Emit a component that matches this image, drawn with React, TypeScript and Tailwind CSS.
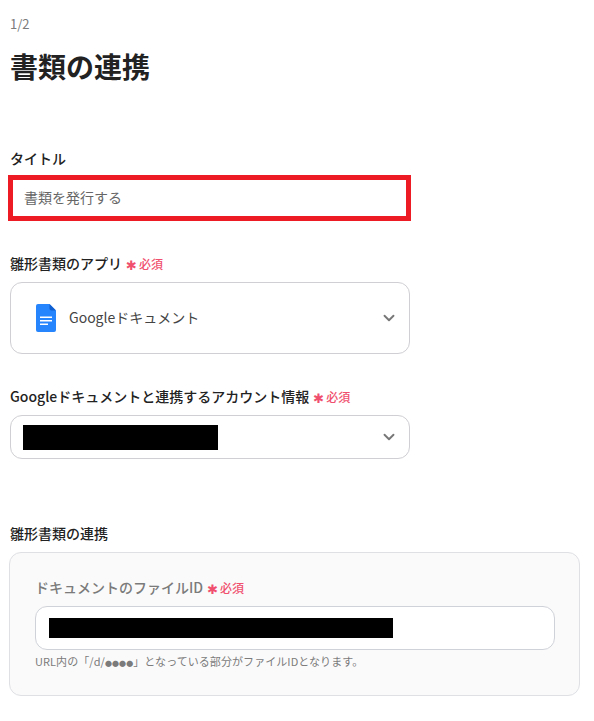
import { ChevronDown } from "lucide-react";

const font = { fontFamily: '"Noto Sans CJK JP", "Liberation Sans", sans-serif' };

function Required() {
  return (
    <span className="ml-[4px] mt-[2px] inline-flex items-center text-[12px] font-medium leading-none text-[#f0506e]">
      <span className="mr-[2px] mt-[2px] text-[13px] leading-none" style={{ fontFamily: '"DejaVu Sans", sans-serif' }}>
        ✱
      </span>
      必須
    </span>
  );
}

function DocsIcon() {
  return (
    <svg width="20" height="28" viewBox="0 0 20 28" aria-hidden="true">
      <path d="M2 0h11.5L20 6.5V26a2 2 0 0 1-2 2H2a2 2 0 0 1-2-2V2a2 2 0 0 1 2-2z" fill="#2684fc" />
      <path d="M13.5 0L20 6.5h-4.5a2 2 0 0 1-2-2z" fill="#0f5fd0" />
      <path d="M4 12.5h12v1.6H4zM4 16h12v1.6H4zM4 19.5h8v1.6H4z" fill="#ffffff" />
    </svg>
  );
}

export default function App() {
  return (
    <div className="h-[721px] w-[594px] overflow-hidden bg-white pl-[10px] text-[#222222]" style={font}>
      <p className="pt-[15px] text-[13px] leading-[18px] text-[#7b7b7b]">1/2</p>
      <h1 className="mt-[13px] text-[28px] font-bold leading-[40px]">書類の連携</h1>

      <label className="mt-[62px] block text-[14px] font-medium leading-[20px]">タイトル</label>
      <div className="-ml-[2px] mt-[7px] flex h-[46px] w-[403px] items-center border-[5px] border-[#ed1c24] pb-[2px] pl-[11px] text-[14px] text-[#666666]">
        書類を発行する
      </div>

      <label className="mt-[33px] flex h-[20px] items-center pb-[2px] text-[14px] font-medium leading-[20px]">
        雛形書類のアプリ
        <Required />
      </label>
      <div className="mt-[8px] flex h-[72px] w-[400px] items-center rounded-[12px] border border-[#cfcfd4] pl-[25px] pr-[11px]">
        <DocsIcon />
        <span className="mb-[2px] ml-[13px] flex-1 text-[14px] text-[#444444]">Googleドキュメント</span>
        <ChevronDown size={18} strokeWidth={2.5} className="text-[#777777]" />
      </div>

      <label className="mt-[33px] flex h-[20px] items-center pb-[2px] text-[14px] font-medium leading-[20px]">
        Googleドキュメントと連携するアカウント情報
        <Required />
      </label>
      <div className="mt-[8px] flex h-[44px] w-[400px] items-center rounded-[12px] border border-[#cfcfd4] pl-[12px] pr-[11px]">
        <div className="h-[25px] w-[195px] bg-black" />
        <span className="flex-1" />
        <ChevronDown size={18} strokeWidth={2.5} className="text-[#777777]" />
      </div>

      <label className="mt-[64px] block text-[14px] font-medium leading-[20px]">雛形書類の連携</label>
      <div className="-ml-px mt-[9px] h-[144px] w-[571px] rounded-[12px] border border-[#dfe0e4] bg-[#fafafa] px-[25px] pt-[25px]">
        <label className="flex h-[20px] items-center pb-[2px] text-[14px] font-medium leading-[20px] text-[#7b7b7b]">
          ドキュメントのファイルID
          <Required />
        </label>
        <div className="mt-[8px] flex h-[44px] w-[520px] items-center rounded-[12px] border border-[#cfd2d8] bg-white pl-[13px]">
          <div className="h-[20px] w-[344px] bg-black" />
        </div>
        <p className="mt-[4px] text-[11px] leading-[15px] tracking-[0.07px] text-[#7b7b7b]">
          URL内の「/d/<span className="text-[7px]">●●●●</span>」となっている部分がファイルIDとなります。
        </p>
      </div>
    </div>
  );
}
